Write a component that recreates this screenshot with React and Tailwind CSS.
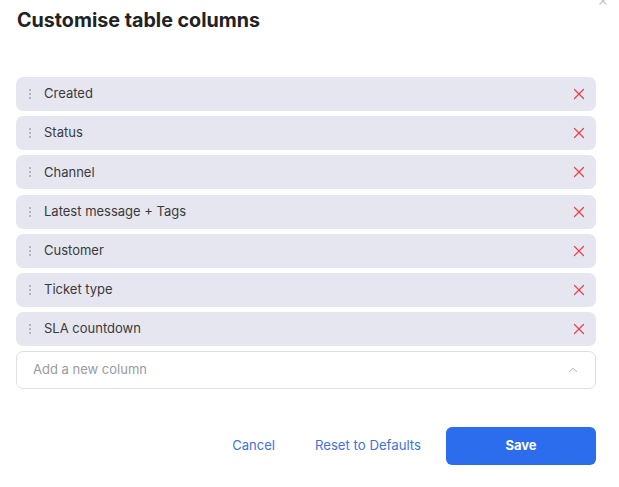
import { ChevronUp, X } from 'lucide-react'

const COLUMNS = [
  'Created',
  'Status',
  'Channel',
  'Latest message + Tags',
  'Customer',
  'Ticket type',
  'SLA countdown',
]

function DragHandle() {
  return (
    <svg width="4" height="12" viewBox="0 0 4 12" className="shrink-0">
      <circle cx="2" cy="2" r="1" fill="#a3a3ad" />
      <circle cx="2" cy="6" r="1" fill="#a3a3ad" />
      <circle cx="2" cy="10" r="1" fill="#a3a3ad" />
    </svg>
  )
}

export default function App() {
  return (
    <div
      className="relative w-[619px] h-[487px] bg-white overflow-hidden"
      style={{ fontFamily: 'Inter, "Noto Sans", sans-serif' }}
    >
      <button type="button" className="absolute right-[10px] top-[-5px] text-[#c4c4c8]">
        <X className="w-3 h-3" strokeWidth={2.5} />
      </button>

      <div className="pl-4 pr-[23px] pt-[7px]">
        <h2 className="text-[19.7px] font-bold text-[#222] leading-[26px] pl-px">
          Customise table columns
        </h2>

        <ul className="mt-[44px] flex flex-col gap-[5.2px]">
          {COLUMNS.map((col) => (
            <li
              key={col}
              className="h-[34px] rounded-[7px] bg-[#e6e6f1] flex items-center pl-[12px] pr-[8px]"
            >
              <DragHandle />
              <span className="ml-[12px] text-[13px] text-[#3a3a3a] flex-1">{col}</span>
              <X className="w-[18px] h-[18px] text-[#e5424d]" strokeWidth={1.6} />
            </li>
          ))}
        </ul>

        <div className="mt-[5px] h-[38px] rounded-[7px] border border-[#dedee4] flex items-center pl-4 pr-[15px]">
          <span className="flex-1 text-[13px] text-[#9a9aa0]">Add a new column</span>
          <ChevronUp className="w-[14px] h-[14px] text-[#9a9aa0]" strokeWidth={1.5} />
        </div>

        <div className="mt-[38px] flex items-center justify-end">
          <button type="button" className="text-[13px] text-[#3f73d9] mr-10">
            Cancel
          </button>
          <button type="button" className="text-[13.2px] text-[#3f73d9] mr-[25px]">
            Reset to Defaults
          </button>
          <button
            type="button"
            className="w-[150px] h-[38px] rounded-[6px] bg-[#2b6ded] text-white text-[13px] font-bold"
          >
            Save
          </button>
        </div>
      </div>
    </div>
  )
}
